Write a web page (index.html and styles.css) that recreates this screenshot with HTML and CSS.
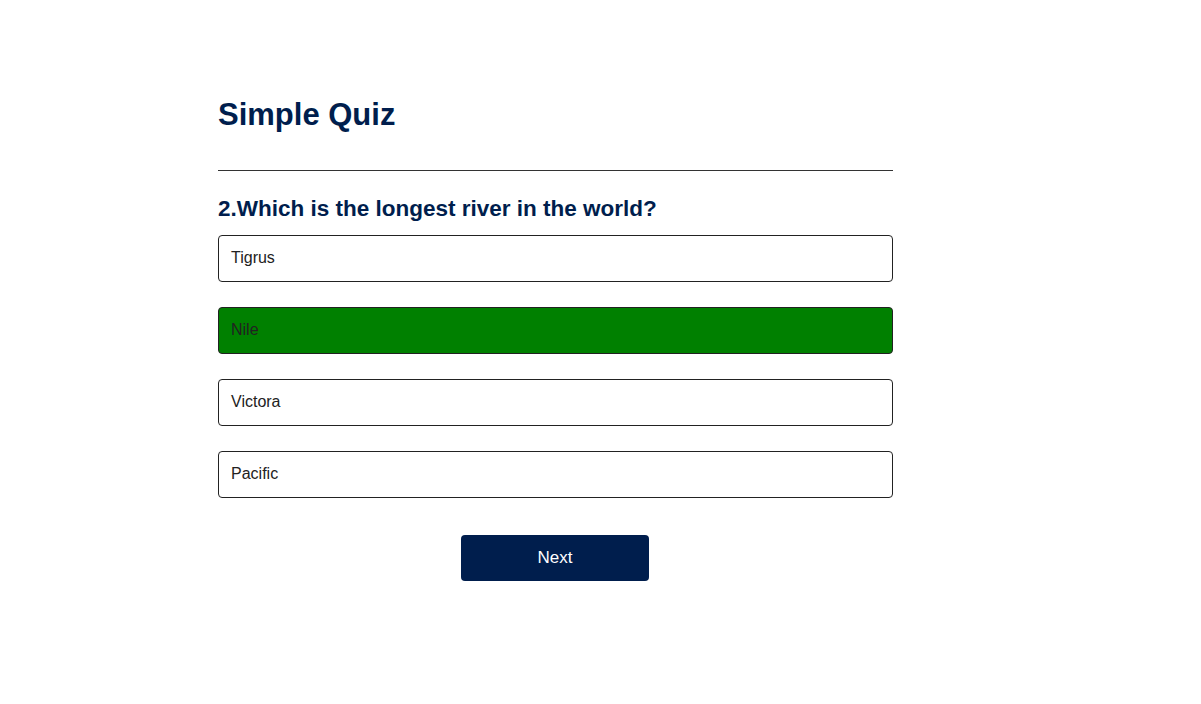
FILE: index.html
```html
<!DOCTYPE html>
<html>
<head>
<meta charset="utf-8">
<link rel="stylesheet" href="styles.css">
</head>
<body>
<div class="app">
  <h1 class="title">Simple Quiz</h1>
  <div class="quiz">
    <h2 class="question">2.Which is the longest river in the world?</h2>
    <div class="answers">
      <button class="btn">Tigrus</button>
      <button class="btn correct">Nile</button>
      <button class="btn">Victora</button>
      <button class="btn">Pacific</button>
    </div>
    <button class="next-btn">Next</button>
  </div>
</div>
</body>
</html>
```
FILE: styles.css
```css
* { box-sizing: border-box; }
html, body { margin: 0; padding: 0; background: #fff; }
body { font-family: "Liberation Sans", Arial, sans-serif; }
.app {
  width: 675px;
  margin: 0 0 0 218px;
  padding-top: 96px;
}
.title {
  margin: 0;
  font-size: 31px;
  line-height: 37px;
  font-weight: 700;
  color: #001e4d;
  padding-bottom: 37px;
  border-bottom: 1px solid #333;
}
.question {
  margin: 24px 0 12px;
  font-size: 22.5px;
  line-height: 28px;
  font-weight: 700;
  color: #001e4d;
}
.answers { display: flex; flex-direction: column; gap: 25px; }
.btn {
  display: block;
  width: 100%;
  height: 47px;
  padding: 0 12px 2px;
  text-align: left;
  font-family: "Liberation Sans", Arial, sans-serif;
  font-size: 16px;
  color: #222;
  background: #fff;
  border: 1px solid #222;
  border-radius: 4px;
}
.btn.correct { background: #008000; }
.next-btn {
  display: block;
  width: 188px;
  height: 46px;
  margin: 37px 0 0 243px;
  padding: 0 0 1px;
  background: #001e4d;
  color: #fff;
  border: 0;
  border-radius: 4px;
  font-family: "Liberation Sans", Arial, sans-serif;
  font-size: 17px;
}
```
